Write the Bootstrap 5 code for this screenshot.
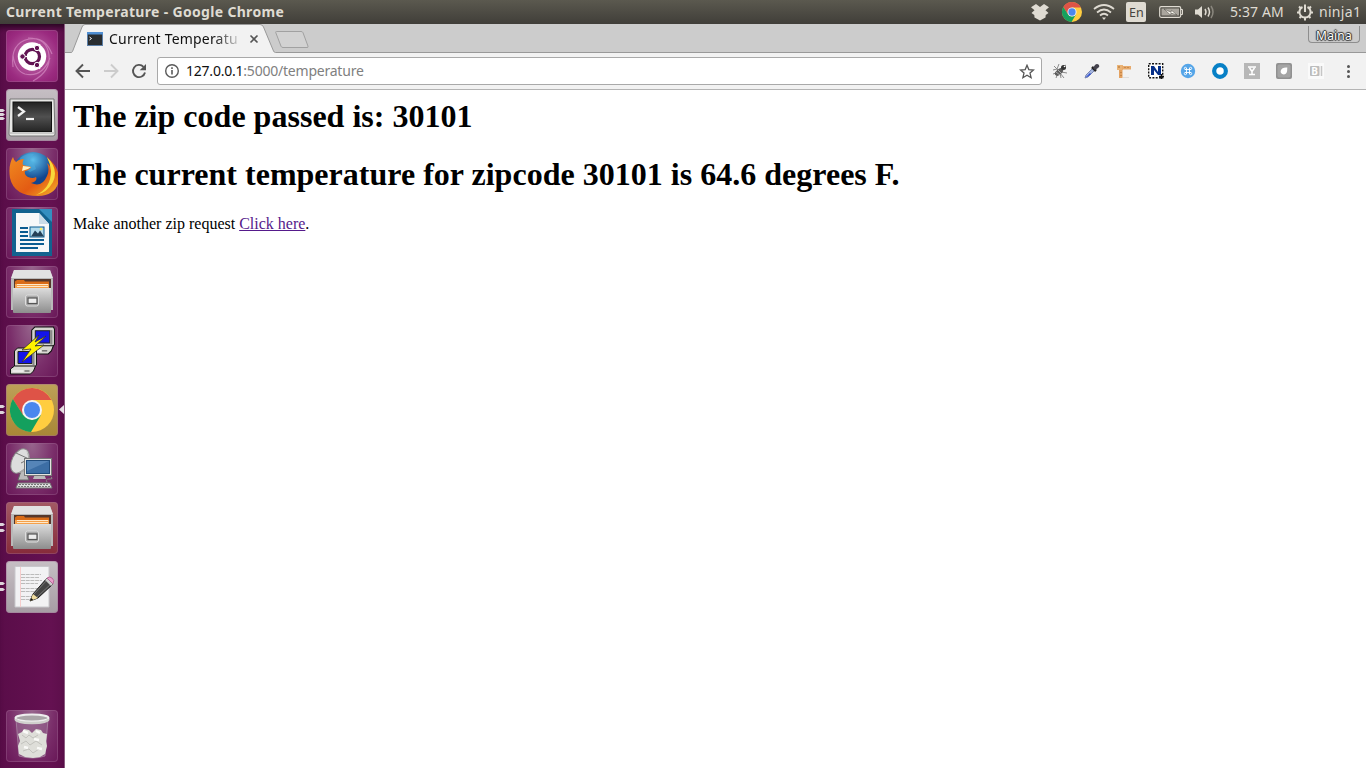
<!DOCTYPE html>
<html lang="en">
<head>
<meta charset="utf-8">
<title>Current Temperature</title>
<link href="https://cdn.jsdelivr.net/npm/bootstrap@5.3.0/dist/css/bootstrap.min.css" rel="stylesheet">
<script src="https://cdn.jsdelivr.net/npm/bootstrap@5.3.0/dist/js/bootstrap.bundle.min.js"></script>
<style>
body{height:768px;width:1366px;font-family:"Noto Sans","Open Sans",sans-serif;background:#fff}
svg{display:block;flex:none}
.panel{height:24px;background:linear-gradient(#5b594f,#403e39);color:#dfdbd2;font-size:14px;line-height:24px;padding:0 5px 0 6px}
.panel-title{font-weight:700;font-size:14px;letter-spacing:.32px}
.gap-11{margin-left:11px}
.gap-12{margin-left:12px}
.gap-13{margin-left:13px}
.clock{margin-left:15px;width:54px;letter-spacing:.1px;white-space:nowrap}
.user{margin-left:5px;width:42px;letter-spacing:.3px}
.dock{width:65px;background:linear-gradient(90deg,#5a0d49,#641151 80%,#5d0f4b);border-right:1px solid #8b5b80;padding:6px 0 6px 6px;gap:7px;box-shadow:inset 0 7px 6px -4px #25051f}
.tile{width:52px;height:52px;border-radius:4px;background:radial-gradient(ellipse at 50% 0,#97668d,#7a2e6a 60%,#681757);box-shadow:inset 0 0 0 1px #a06a9466}
.tile-grey{background:linear-gradient(#c6bfc4,#a69da4)}
.tile-ubuntu{background:radial-gradient(circle at 50% 50%,#c574b1,#9b2b80 72%,#8d2072)}
.tile-gold{background:linear-gradient(#bda158,#a88736)}
.tile-red{background:linear-gradient(#a35a64,#862b3a)}
.pips{left:-6px;top:20px}
.caret-now{left:52px;top:20px}
.tabstrip{height:29px;background:#ccc}
.tab-label{left:44px;top:5px;width:140px;height:20px;line-height:20px;font-size:14px;color:#111;letter-spacing:.2px;white-space:nowrap;-webkit-mask-image:linear-gradient(90deg,#000 105px,transparent 134px)}
.profile{right:6px;top:2px;width:52px;height:17px;border:1px solid #8e8e8e;border-top:0;border-radius:0 0 4px 4px;font-size:12px;line-height:19px;text-align:center;color:#fff;letter-spacing:.2px;text-shadow:0 0 1px #222,1px 0 1px #333,-1px 0 1px #333,0 1px 1px #333,0 -1px 1px #333}
.toolbar{height:37px;background:#f2f2f2;border-bottom:1px solid #b4b4b4;padding:4px 6px 4px 6px}
.address{width:885px;height:28px;background:#fff;border:1px solid #a9a9a9;border-radius:3px;padding:0 6px 2px 6px;font-size:14px;color:#808080;letter-spacing:-.22px}
.address b{font-weight:400;color:#111}
.url{margin-left:6px}
.extensions{gap:16px;margin-left:10px}
.page{font-family:"Liberation Serif",serif;color:#000;padding:8px;font-size:16px;line-height:18px}
.page h1{font-size:32px;font-weight:700;line-height:37px;margin:0 0 21px;letter-spacing:.014px}
.page h1+div{margin-top:22px}
.page a{color:#551a8b}
</style>
</head>
<body class="d-flex flex-column overflow-hidden">
<svg width="0" height="0" class="position-absolute"><defs>
<linearGradient id="steel" x2="0" y2="1"><stop stop-color="#dcdcdc"/><stop offset="1" stop-color="#8d8d8d"/></linearGradient>
<linearGradient id="dark" x2="0" y2="1"><stop stop-color="#222"/><stop offset=".5" stop-color="#505050"/><stop offset="1" stop-color="#252525"/></linearGradient>
<linearGradient id="fox" x2="1" y2="1"><stop stop-color="#f08a20"/><stop offset=".6" stop-color="#e35b13"/><stop offset="1" stop-color="#f6b82b"/></linearGradient>
<radialGradient id="globe" cy=".2"><stop stop-color="#5ec0ec"/><stop offset="1" stop-color="#12458e"/></radialGradient>
<symbol id="chrome" viewBox="0 0 44 44">
<circle cx="22" cy="22" r="22" fill="#ffcd40"/>
<path d="M2.900 11A22 22 0 0 1 41.500 12H22L12.800 27z" fill="#de5347"/>
<path d="M2.900 11A22 22 0 0 0 21 44L31 27 22 32 13 27z" fill="#14a05e"/>
<circle cx="22" cy="22" r="10" fill="#f4f4f4"/><circle cx="22" cy="22" r="8" fill="#4a87ee"/></symbol>
<symbol id="pips" viewBox="0 0 6 12"><path d="M0 1h3l2 1.500L3 4H0zM0 7h3l2 1.500L3 10H0z" fill="#ddd5db"/></symbol>
<symbol id="pips3" viewBox="0 0 6 12"><path d="M0 0h3l2 1.500-2 1.500H0zM0 4h3l2 1.500L3 7H0zM0 8h3l2 1.500L3 11H0z" fill="#ddd5db"/></symbol>
<symbol id="cabinet" viewBox="0 0 52 52">
<path d="M8 4h36l3 9v31H5V13z" fill="#b9b9b9"/><path d="M8 4h36l3 8H5z" fill="#e2e2e2"/>
<path d="M8 13h37v12H8z" fill="#55382c"/><path d="M9 15.500l2-1.500h7l1 1.500h24V25H9z" fill="#d96c18"/><path d="M9 18h34v7H9z" fill="#f5a04a"/><path d="M11 18.500h31M11 20.500h31" stroke="#fff0d8" stroke-width=".9"/>
<path d="M7 22h38v24q0 1-1 1H8q-1 0-1-1z" fill="url(#steel)"/><path d="M7 22.500h38" stroke="#ddd"/>
<rect x="19.500" y="29" width="13" height="11" rx="2" fill="#aaa" stroke="#ddd"/><rect x="22" y="32" width="9" height="5.500" fill="#ededed" stroke="#555" stroke-width="1.200"/></symbol>
<symbol id="oldpc" viewBox="0 0 28 28"><path d="M8 1h18l1 2v15l-3 3H6L5 19V4z" fill="#d5d5cf" stroke="#111"/><path d="M8.500 4.500h14v12h-14z" fill="#1414e8" stroke="#222"/><path d="M24 4v14" stroke="#888" stroke-width="2"/><path d="M1 22l4-3h21l-2 5-3 3H1z" fill="#d8d8d2" stroke="#111"/><path d="M3 24h11" stroke="#fff"/><path d="M15 24h5" stroke="#444"/></symbol>
</defs></svg>

<header class="panel d-flex align-items-center flex-shrink-0">
<span class="panel-title me-auto">Current Temperature - Google Chrome</span>
<svg width="20" height="18" viewBox="0 0 20 18" fill="#dfdbd2"><path d="M1 4.200L6 1l4 3 4-3 5 3.200-3.500 3L18.500 10l-2.800 2-.2 2.500L10 17.500l-5.500-3L4.300 12 1.500 10l3-2.800z"/></svg>
<svg width="20" height="20" class="gap-12"><use href="#chrome" width="20" height="20"/></svg>
<svg width="22" height="18" viewBox="0 0 22 18" fill="none" stroke="#dfdbd2" stroke-width="1.700" class="gap-11"><path d="M1 6q10-8 20 0M4 9.500q7-6 14 0M7 12.500q4-3.500 8 0"/><path d="M9 14.500h4L11 17z" fill="#dfdbd2" stroke="none"/></svg>
<svg width="20" height="20" class="gap-11"><rect width="20" height="20" rx="2" fill="#dfdbd2"/><text x="3" y="15" font-size="12.500" fill="#45433d">En</text></svg>
<svg width="25" height="14" viewBox="0 0 25 14" class="gap-13"><rect x=".7" y="1.700" width="21" height="10.600" rx="1.500" fill="none" stroke="#dfdbd2" stroke-width="1.200"/><path d="M22 4.500h1.500v5H22" fill="none" stroke="#dfdbd2"/><path d="M2.500 3.500H20v7H2.500z" fill="#aaa69e"/><path d="M5 4l7 3.300.5-2L18 10l-6-2-.5 2z" fill="#fffdf5" stroke="#45433d" stroke-width=".5"/></svg>
<svg width="20" height="16" viewBox="0 0 20 16" fill="none" stroke="#dfdbd2" stroke-width="1.500" class="gap-11"><path d="M0 5.500h3L7 2v12l-4-3.500H0z" fill="#dfdbd2" stroke="none"/><path d="M10 5q2 3 0 6M13 3.500q3 4.500 0 9"/><path d="M16 2q4 6 0 12" stroke="#8a877e"/></svg>
<span class="clock">5:37 AM</span>
<svg width="18" height="18" viewBox="0 0 18 18" fill="none" stroke="#dfdbd2" class="gap-12"><path d="M6.500 4a5.600 5.600 0 1 0 5 0" stroke-width="2"/><path d="M9 1.500V9" stroke-width="2"/><path d="M1 9.500h2M15 9.500h2M9 15v2.500M3 3.500l2 2M15 3.500l-2 2M3.500 15l1.500-1.500M14.500 15L13 13.500" stroke-width="2"/></svg>
<span class="user">ninja1</span>
</header>

<div class="d-flex flex-grow-1">
<nav class="dock d-flex flex-column flex-shrink-0">
<div class="tile tile-ubuntu"><svg width="52" height="52"><g fill="none" stroke="#e3a3d4" stroke-opacity=".55" stroke-width="1.200"><path d="M7 37Q4 13 23 9q16-3 23 15M22 8q19 0 21 17 2 16-16 26M44 28q-8 20-25 16Q9 41 7 25"/></g><circle cx="26" cy="26.500" r="14.200" fill="#fff"/><circle cx="26.300" cy="26.500" r="7.200" fill="none" stroke="#621453" stroke-width="3.200"/><path d="M15 26.500h6M34 14l-4 6M34 39l-4-6" stroke="#fff" stroke-width="1.200"/><g fill="#621453" stroke="#fff"><circle cx="16.500" cy="26.500" r="2.700"/><circle cx="31" cy="18" r="2.700"/><circle cx="31" cy="35" r="2.700"/></g></svg></div>
<div class="tile tile-grey position-relative"><svg class="pips position-absolute" width="6" height="12"><use href="#pips3"/></svg><svg width="52" height="52"><path d="M4 10h44l1 35q0 2-2 2H5q-2 0-2-2z" fill="#e8e8e6" stroke="#777"/><path d="M4 44h44" stroke="#aaa"/><rect x="7" y="13" width="38.500" height="29.500" fill="url(#dark)" stroke="#111"/><path d="M12 18l6 4.500-6 4.500" fill="none" stroke="#f2f2f2" stroke-width="2.200"/><path d="M20 30h8" stroke="#f2f2f2" stroke-width="2.200"/></svg></div>
<div class="tile"><svg width="52" height="52"><circle cx="27" cy="24" r="20" fill="url(#globe)"/><path d="M14 10q8-6 14-4l-5 6 5 3 2 6-6 3-8-5z" fill="#4eb0df" opacity=".5"/><path d="M7 9q1 4 3 5 3-3 8-3-2 3-1 6l8 2q-1 3-6 4-1 4 3 6 5 2 8 0 2 4-5 6 11 5 16-7 3-7 0-13 5 4 5 9-1-9-5-14 11 7 12 20-1 17-21 18Q8 48 4 30 2 17 7 9z" fill="url(#fox)"/><path d="M41 9q12 12 6 25-6 11-17 13 15-7 15-24-1-8-4-14z" fill="#f9d83a"/><path d="M17 18l8 1-3 2-6 2z" fill="#fff0c0"/></svg></div>
<div class="tile"><svg width="52" height="52"><path d="M6 2h29l11 12v35H6z" fill="#12628f"/><path d="M10 6h23l10 11v28H10z" fill="#f6f8f9"/><path d="M33 2h13v13z" fill="#348fc0"/><path d="M33 6v11h10z" fill="#c9dce8"/><path d="M14 21h8M14 25h8M14 29h8M14 33h24M14 37h24M14 41h18" stroke="#0a5c91" stroke-width="2"/><rect x="24" y="20" width="14" height="10" fill="#b5dced" stroke="#0a5c91"/><path d="M25 29.500l4-6 3 3 2-3 4 6z" fill="#244057"/><circle cx="35" cy="22" r="1.300" fill="#fff064"/></svg></div>
<div class="tile"><svg width="52" height="52"><use href="#cabinet"/></svg></div>
<div class="tile"><svg width="52" height="52"><use href="#oldpc" x="20" y="1" width="30" height="29"/><use href="#oldpc" x="2" y="22" width="31" height="28"/><path d="M33 10L16 25l9-1-9 13 22-17-9 1 11-10-11 6z" fill="#fff200" stroke="#333" stroke-width=".8"/></svg></div>
<div class="tile tile-gold position-relative"><svg class="pips position-absolute" width="6" height="12"><use href="#pips"/></svg><svg width="52" height="52"><use href="#chrome" x="4" y="4" width="44" height="44"/></svg><svg class="caret-now position-absolute" width="6" height="12"><path d="M6 1v9L1 5.500z" fill="#e6dfe4"/></svg></div>
<div class="tile"><svg width="52" height="52"><path d="M15 28l-3 9h11l-4-10z" fill="#bbb" stroke="#666"/><ellipse cx="14" cy="18" rx="8" ry="13" transform="rotate(27 14 18)" fill="#ddd" stroke="#888"/><path d="M20 7q7 15-8 23 8 0 11-7t-3-16z" fill="#aaa"/><path d="M15 20l8-4M10 10l13 6" stroke="#777"/><path d="M29 31h9l2 5H27z" fill="#bbb"/><rect x="18.500" y="15.500" width="27" height="17" fill="#e4e4e0" stroke="#777"/><rect x="20.500" y="17.500" width="23" height="13" fill="#3c6ea5" stroke="#204c7c"/><path d="M21 18h22L21 28z" fill="#7ca7d4" opacity=".4"/><path d="M12 40h32l2 5H10z" fill="#ddd" stroke="#777"/><path d="M13 41.500h30M12 43.500h32" stroke="#777" stroke-dasharray="2 1"/><path d="M41 39q-2-3 2-3 5 0 2-2" fill="none" stroke="#888"/></svg></div>
<div class="tile tile-red position-relative"><svg class="pips position-absolute" width="6" height="12"><use href="#pips"/></svg><svg width="52" height="52"><use href="#cabinet"/></svg></div>
<div class="tile tile-grey position-relative"><svg class="pips position-absolute" width="6" height="12"><use href="#pips"/></svg><svg width="52" height="52"><path d="M9 5.500h34V46H9z" fill="#f2f2f4" stroke="#c8c8cc"/><path d="M14.500 6v40" stroke="#f5cccc"/><path d="M15 13.500h20M15 16.500h18M15 19.500h21M15 22.500h17M15 27.500h18M15 30.500h15M15 35.500h12M15 38.500h9" stroke="#bbb" stroke-dasharray="4 .7"/><path d="M24 40l3-7L41 17l6 6-15 14z" fill="#444" stroke="#222"/><path d="M28 33L42 18M31 36L46 22" stroke="#777"/><path d="M24 40l3-7 5 4z" fill="#f0dda0"/><path d="M24 40l1.200-3 2 1.700z" fill="#111"/><path d="M39 19l2-2 6 6-2 2z" fill="#ccc"/><path d="M41 17q3-2 5 0 3 2 1 6z" fill="#e8a0cc" stroke="#b66898"/></svg></div>
<div class="tile mt-auto"><svg width="52" height="52"><path d="M10 9h32l-3 37q-12 4-26 0z" fill="#9a7095" fill-opacity=".5" stroke="#ae91aa" stroke-opacity=".7"/><path d="M13 44l-1-8 2-5-2-7 4-2 2-3 5 1 3 3 4-4 5 1 2 3 4 1-1 7 1 5-2 8-5 3-7 1-8-1z" fill="#deded9"/><path d="M16 25l4 3 3-3 4 3 5-3M15 34l5-3 4 4 6-4 6 4M17 41l6-2 4 4 6-4" fill="none" stroke="#c2c2bd"/><path d="M17 21l5 2M28 29l5 1M18 37l4 1M31 38l5 1M30 21l4 2" stroke="#fafaf8" stroke-width="2.500"/><ellipse cx="26" cy="8" rx="16.500" ry="3.500" fill="#aaa6a8" stroke="#eee" stroke-width="2"/><path d="M9.500 9q1 4 16.500 4t16.500-4" fill="none" stroke="#d0d0cd" stroke-width="2.500"/></svg></div>
</nav>

<main class="flex-grow-1 d-flex flex-column">
<div class="tabstrip position-relative flex-shrink-0">
<svg width="1301" height="30" class="position-absolute"><path d="M0 28.500h6q1 0 1.500-1L17 3q1-2.500 3-2.500h175q2.500 0 3.500 2.500l10 24q.7 1.500 2 1.500H1301V30H0z" fill="#f2f2f2" stroke="#999"/><path d="M0 29h1301v1H0z" fill="#f2f2f2"/><path d="M211.500 7.500H236q1.500 0 2 1.200l5 13.500q.5 1.300-1 1.300h-24q-1.500 0-2-1.300l-5.200-13.500q-.5-1.200.7-1.200z" fill="#d2d2d2" stroke="#a1a1a1"/>
<rect x="22.500" y="8.500" width="15" height="13" fill="#292d30" stroke="#5d80a8"/><path d="M22 8h16v2.500H22z" fill="#4f8ed2"/><path d="M24.500 13l2 1.500-2 1.500" stroke="#fff" fill="none"/><path d="M185.500 11.500l7 7m0-7l-7 7" stroke="#555" stroke-width="1.600"/></svg>
<div class="tab-label position-absolute">Current Temperatu</div>
<div class="profile position-absolute">Maina</div>
</div>
<div class="toolbar d-flex align-items-center flex-shrink-0">
<svg width="86" height="28" viewBox="0 0 86 28" fill="none" stroke-width="1.900"><path d="M19 14H6M12 7.500L5.500 14l6.500 6.500" stroke="#555"/><path d="M33 14h13M40 7.500l6.500 6.500-6.500 6.500" stroke="#ccc"/><path d="M72.500 9.800a6.100 6.100 0 1 0 1.500 5.700" stroke="#555"/><path d="M75 7v6.300h-6.300z" fill="#555"/></svg>
<div class="address d-flex align-items-center flex-shrink-0">
<svg width="16" height="16" viewBox="0 0 16 16" class="mt-1"><circle cx="8" cy="7" r="6.300" fill="none" stroke="#5a5a5a" stroke-width="1.400"/><path d="M8 6v4.500M8 3.300v1.600" stroke="#5a5a5a" stroke-width="1.600"/></svg>
<span class="url me-auto"><b>127.0.0.1</b>:5000/temperature</span>
<svg width="16" height="16" viewBox="0 0 16 16" class="mt-1"><path d="M8 1.300l1.800 4.300 4.700.4L11 9.100l1.100 4.600L8 11.300l-4.100 2.400L5 9.100 1.500 6l4.700-.4z" fill="none" stroke="#555" stroke-width="1.300"/></svg>
</div>
<div class="extensions d-flex">
<svg width="16" height="16"><path d="M1 7l4-1 2-5M4 15l2-5M1 11l6-2M9 15l-1-5 4 5M8 6l6-4M9 9l6 1M2 3l5 5" stroke="#8a8a8a" fill="none"/><ellipse cx="7" cy="9" rx="4.800" ry="2.700" transform="rotate(-40 7 9)" fill="#5c5c5c"/><circle cx="11.500" cy="4.500" r="2.500" fill="#333"/><path d="M4 9l4 3M6 7l3 3" stroke="#aaa"/><circle cx="12.500" cy="3.500" r=".8" fill="#fff"/></svg>
<svg width="16" height="16"><path d="M1 15l1-3 7-7 2 2-7 7z" fill="#a5b5dc" stroke="#6472a8" stroke-width=".8"/><path d="M2 14l4-4 1 1-4 3z" fill="#2447d8"/><path d="M8 4l4 4" stroke="#222" stroke-width="2.500"/><path d="M9 5l2-3q2-2 4 0 1 2-1 3l-3 2z" fill="#45434e"/></svg>
<svg width="16" height="16"><path d="M3 5h3.500v10H3z" fill="#e4a261"/><path d="M1 2h6v5H1z" fill="#eab477"/><path d="M6 3h9v3.500H6z" fill="#e7aa6c"/><path d="M7 14.500h6" stroke="#ddd"/><path d="M9 4v1M12 4v1M3 3v2M5 9v1M5 12v1" stroke="#aa6d33"/></svg>
<svg width="16" height="16"><path d="M.7.700h14v14H.7z" fill="#fff" stroke="#111" stroke-width="1.400" stroke-dasharray="2 1.300"/><path d="M3 3h3l4 6V3h3v9h-3L6 7v5H3z" fill="#062f88"/><path d="M13.500 11v5M11 13.500h5" stroke="#111" stroke-width="1.500"/></svg>
<svg width="16" height="16"><circle cx="8" cy="8" r="7.200" fill="#55a5e8"/><g fill="none" stroke="#fff" stroke-width=".9"><path d="M6.500 5v6M9.500 5v6M5 6.500h6M5 9.500h6"/><circle cx="5.400" cy="5.400" r="1.100"/><circle cx="10.600" cy="5.400" r="1.100"/><circle cx="5.400" cy="10.600" r="1.100"/><circle cx="10.600" cy="10.600" r="1.100"/></g></svg>
<svg width="16" height="16"><circle cx="8" cy="8" r="5.850" fill="#fff" stroke="#0780c6" stroke-width="4.200"/></svg>
<svg width="16" height="16"><path d="M0 0h16v16H0z" fill="#b7b7b7"/><path d="M4 4h8M5.500 5L8 8.500 10.500 5M8 8v3M5 11.500h6" stroke="#fff" stroke-width="1.500" fill="none"/></svg>
<svg width="16" height="16"><rect width="16" height="16" rx="2" fill="#919191"/><rect x="1.500" y="1.500" width="13" height="13" rx="2" fill="#a5a5a5"/><path d="M11.300 4.500q.2 7-3.500 7-4-1-3-4Q6 4 11.300 4.500z" fill="#fff"/></svg>
<svg width="16" height="16"><path d="M0 0h16v16H0z" fill="#fafafa"/><rect x="2" y="3" width="9.500" height="10" rx="1" fill="#bdbdbd"/><text x="3.300" y="11.500" font-size="10" font-weight="700" fill="#fff">B</text><path d="M13.500 3v10" stroke="#c6c6c6" stroke-width="1.500"/></svg>
<svg width="16" height="16" fill="#555"><circle cx="8.500" cy="3.500" r="1.500"/><circle cx="8.500" cy="8.500" r="1.500"/><circle cx="8.500" cy="13.500" r="1.500"/></svg>
</div>
</div>
<div class="page flex-grow-1">
<h1>The zip code passed is: 30101</h1>
<h1>The current temperature for zipcode 30101 is 64.6 degrees F.</h1>
<div>Make another zip request <a href="#">Click here</a>.</div>
</div>
</main>
</div>
</body>
</html>
